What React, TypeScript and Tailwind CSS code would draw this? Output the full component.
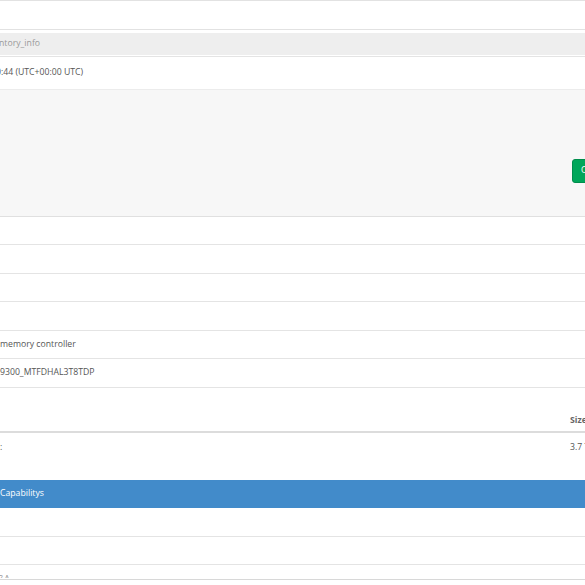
export default function App() {
  const plainRows = [
    { h: "h-[28px]", text: "" },
    { h: "h-[29px]", text: "" },
    { h: "h-[28px]", text: "" },
    { h: "h-[29px]", text: "" },
    { h: "h-[28px]", text: "memory controller" },
    { h: "h-[29px]", text: "9300_MTFDHAL3T8TDP" },
  ];
  return (
    <div
      className="h-[585px] w-[585px] overflow-hidden bg-white text-[8.7px] text-[#555]"
      style={{ fontFamily: '"Open Sans", "Liberation Sans", sans-serif' }}
    >
      <div className="h-[30px] border-y border-[#e2e2e2]" />
      <div className="h-[3px]" />
      <div className="flex h-[22px] items-center bg-[#eeeeee] text-[#9a9a9a]">
        <span className="-ml-[1px]">ntory_info</span>
      </div>
      <div className="h-[2px] border-b border-[#e4e4e4]" />
      <div className="flex h-[33px] items-center border-b border-[#ececec]">
        <span className="-ml-[4px]">0:44 (UTC+00:00 UTC)</span>
      </div>
      <div className="flex h-[127px] items-start justify-end border-b border-[#e0e0e0] bg-[#f7f7f7] pt-[69px]">
        <div className="-mr-[14px] flex h-[24px] w-[27px] items-center rounded-[3px] border border-[#008d4c] bg-[#00a65a] pl-[8px] text-white">
          C
        </div>
      </div>
      {plainRows.map((r, i) => (
        <div key={i} className={`flex ${r.h} items-center border-b border-[#e4e4e4]`}>
          <span>{r.text}</span>
        </div>
      ))}
      <div className="flex h-[45px] items-end justify-end border-b-2 border-[#dcdcdc] pb-[4px] font-bold text-[#666]">
        <span className="w-[15px]">Size</span>
      </div>
      <div className="flex h-[47px] items-start justify-between pt-[8px]">
        <span>:</span>
        <span className="w-[15px] whitespace-nowrap">3.7 TB</span>
      </div>
      <div className="flex h-[28px] items-center bg-[#428bca] text-white">
        <span>Capabilitys</span>
      </div>
      <div className="h-[29px] border-b border-[#e4e4e4]" />
      <div className="h-[28px] border-b border-[#e4e4e4]" />
      <div className="flex h-[15px] items-end border-b border-[#d8d8d8] pb-[1px] text-[7px] leading-none text-[#888]">
        <span className="-ml-[1px] h-[4px] overflow-hidden">2 A</span>
      </div>
    </div>
  );
}
